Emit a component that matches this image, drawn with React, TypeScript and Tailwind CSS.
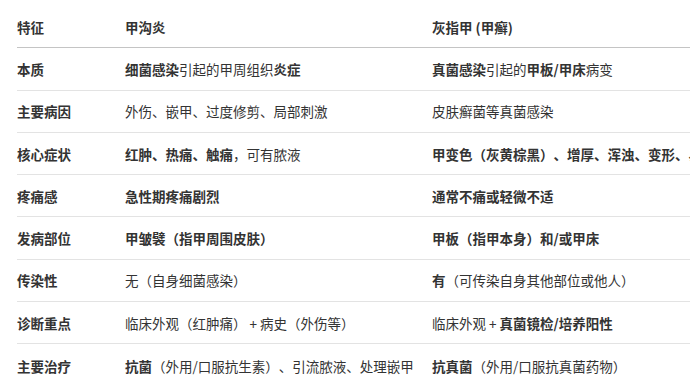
import React from "react";

type Seg = { t: string; b?: boolean };
type Row = { label: string; a: Seg[]; b: Seg[] };

const ROWS: Row[] = [
  {
    label: "本质",
    a: [{ t: "细菌感染", b: true }, { t: "引起的甲周组织" }, { t: "炎症", b: true }],
    b: [
      { t: "真菌感染", b: true },
      { t: "引起的" },
      { t: "甲板/甲床", b: true },
      { t: "病变" },
    ],
  },
  {
    label: "主要病因",
    a: [{ t: "外伤、嵌甲、过度修剪、局部刺激" }],
    b: [{ t: "皮肤癣菌等真菌感染" }],
  },
  {
    label: "核心症状",
    a: [{ t: "红肿、热痛、触痛", b: true }, { t: "，可有脓液" }],
    b: [{ t: "甲变色（灰黄棕黑）、增厚、浑浊、变形、易碎", b: true }],
  },
  {
    label: "疼痛感",
    a: [{ t: "急性期疼痛剧烈", b: true }],
    b: [{ t: "通常不痛或轻微不适", b: true }],
  },
  {
    label: "发病部位",
    a: [{ t: "甲皱襞（指甲周围皮肤）", b: true }],
    b: [{ t: "甲板（指甲本身）和/或甲床", b: true }],
  },
  {
    label: "传染性",
    a: [{ t: "无（自身细菌感染）" }],
    b: [{ t: "有", b: true }, { t: "（可传染自身其他部位或他人）" }],
  },
  {
    label: "诊断重点",
    a: [{ t: "临床外观（红肿痛） + 病史（外伤等）" }],
    b: [{ t: "临床外观 + " }, { t: "真菌镜检/培养阳性", b: true }],
  },
  {
    label: "主要治疗",
    a: [{ t: "抗菌", b: true }, { t: "（外用/口服抗生素）、引流脓液、处理嵌甲" }],
    b: [{ t: "抗真菌", b: true }, { t: "（外用/口服抗真菌药物）" }],
  },
];

function Cell({ segs }: { segs: Seg[] }) {
  return (
    <div className="whitespace-pre">
      {segs.map((s, i) => (
        <span key={i} className={s.b ? "font-bold" : "font-normal"}>
          {s.t}
        </span>
      ))}
    </div>
  );
}

export default function App() {
  return (
    <div
      className="w-[690px] h-[386px] overflow-hidden bg-white text-[#333333] text-[13.5px] leading-[18px] [text-spacing-trim:space-all]"
      style={{ fontFamily: '"Noto Sans CJK SC", "Noto Sans", sans-serif' }}
    >
      <div className="pt-[6px] pl-[17px] w-[900px]">
        <div className="grid grid-cols-[108px_307px_1fr] items-center h-[42.3px] border-b border-[#c4c4c4] font-bold">
          <div>特征</div>
          <div>甲沟炎</div>
          <div>灰指甲 (甲癣)</div>
        </div>
        {ROWS.map((r, i) => (
          <div
            key={r.label}
            className={`grid grid-cols-[108px_307px_1fr] items-center h-[42.3px] ${
              i < ROWS.length - 1 ? "border-b border-[#e3e3e3]" : ""
            }`}
          >
            <div className="font-bold">{r.label}</div>
            <Cell segs={r.a} />
            <Cell segs={r.b} />
          </div>
        ))}
      </div>
    </div>
  );
}
